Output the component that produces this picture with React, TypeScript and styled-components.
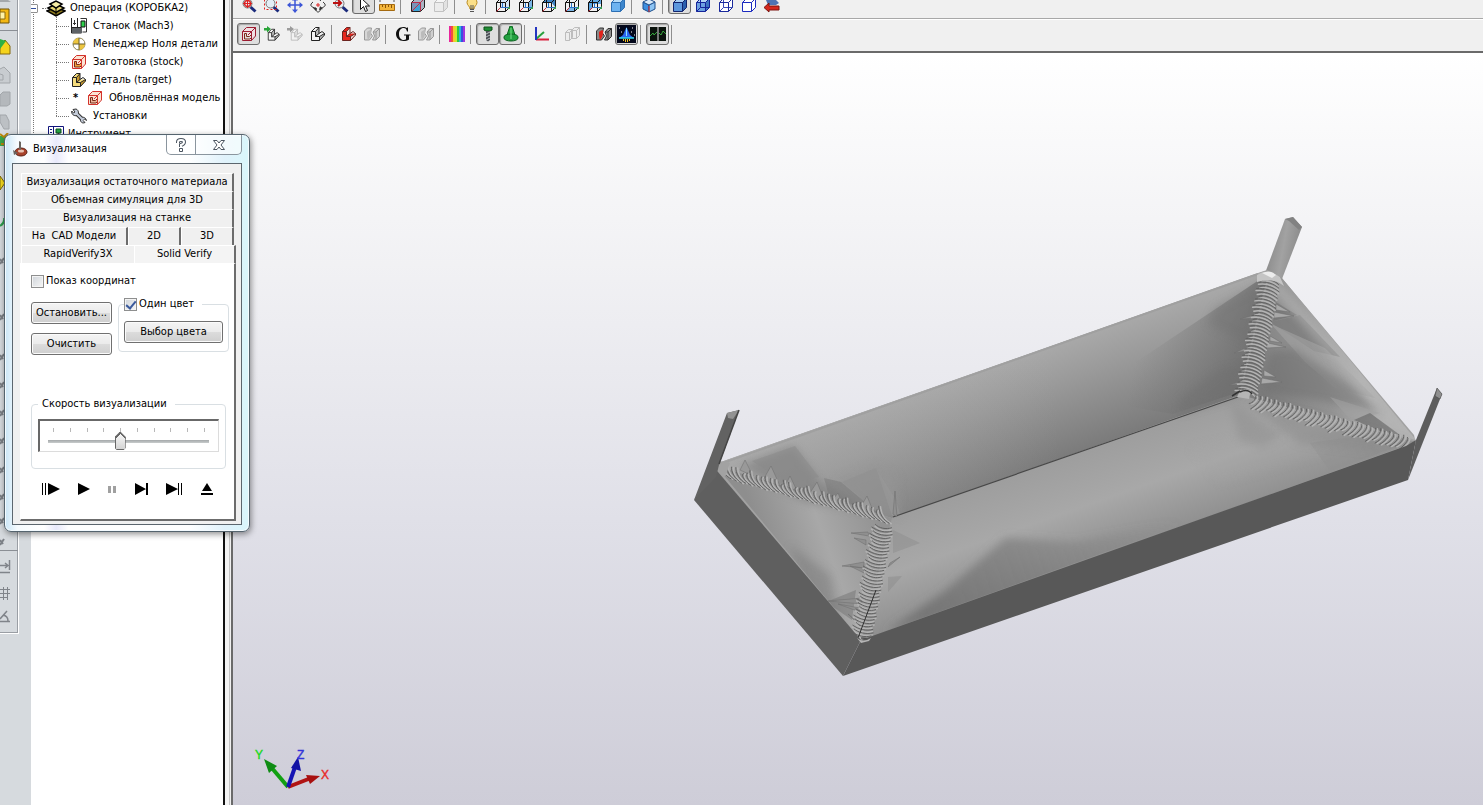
import React from "react";
import styled, { createGlobalStyle, css } from "styled-components";

const Global = createGlobalStyle`
  * { box-sizing: border-box; }
  body { margin: 0; overflow: hidden; background: #d6dade; }
  body, button, input, legend {
    font-family: "DejaVu Sans Condensed", "DejaVu Sans", sans-serif;
    font-size: 11px;
    line-height: 14px;
    color: #000;
  }
  svg { display: block; flex: none; }
`;

/* ---------- frame ---------- */

const Desktop = styled.div`
  position: relative;
  display: flex;
  height: 100vh;
  overflow: hidden;
`;

const SideStrip = styled.nav`
  flex: none;
  width: 31px;
  background: #d6dade;
`;

const SideTools = styled.div`
  display: flex;
  flex-direction: column;
  width: 19px;
  height: 634px;
  overflow: hidden;
  border-right: 1px solid #fff;
  border-bottom: 1px solid #fff;
  box-shadow: inset -1px -1px 0 #9a9ea4;
`;

const SideGroup = styled.div<{ $h: number; $rule?: boolean }>`
  position: relative;
  flex: none;
  height: ${(p) => p.$h}px;
  display: flex;
  flex-direction: column;
  border-bottom: ${(p) => (p.$rule ? "1px solid #8b8f95" : "none")};
`;

const SideButton = styled.button<{ $h: number }>`
  display: flex;
  align-items: center;
  width: 30px;
  height: ${(p) => p.$h}px;
  padding: 0;
  border: 0;
  background: none;
`;

const TreePane = styled.aside`
  flex: none;
  width: 192px;
  background: #fff;
  overflow: hidden;
`;

const Splitter = styled.div`
  flex: none;
  width: 10px;
  background: #f0f0f0;
  border-left: 2px solid #111;
  border-right: 2px solid #6a6a6a;
  box-shadow: inset 4px 0 0 #f4f4f4, inset 5px 0 0 #c4c4c4;
`;

const Main = styled.main`
  flex: 1;
  min-width: 0;
  display: flex;
  flex-direction: column;
  background: #f0f0f0;
`;

/* ---------- toolbars ---------- */

const Toolbar = styled.div<{ $clipped?: boolean }>`
  flex: none;
  display: flex;
  align-items: ${(p) => (p.$clipped ? "flex-end" : "center")};
  height: ${(p) => (p.$clipped ? 19 : 32)}px;
  padding: ${(p) => (p.$clipped ? "0 4px 4px" : "0 4px 1px")};
  overflow: hidden;
  border-bottom: 1px solid ${(p) => (p.$clipped ? "#a8a8a8" : "#f0f0f0")};
  box-shadow: 0 1px 0 #fff;
  button {
    padding-top: ${(p) => (p.$clipped ? 3 : 0)}px;
  }
`;

const ToolButton = styled.button<{ $pressed?: boolean }>`
  flex: none;
  display: flex;
  align-items: center;
  justify-content: center;
  width: 23px;
  height: 22px;
  padding: 0;
  border: 1px solid transparent;
  border-radius: 3px;
  background: none;
  ${(p) =>
    p.$pressed &&
    css`
      border-color: #6d6d6d;
      background: #dedede;
      box-shadow: inset 1px 1px 1px #a5a5a5;
    `}
`;

const ToolRule = styled.span`
  flex: none;
  width: 8px;
  height: 19px;
  border-left: 2px solid transparent;
  background: linear-gradient(#8e8e8e, #8e8e8e) 0 0 / 1px 100% no-repeat;
`;

const Viewport = styled.section`
  position: relative;
  flex: 1;
  min-height: 0;
  border-top: 2px solid #6a6a6a;
  background: linear-gradient(#ffffff, #f4f4f6 22%, #e0e0e8 62%, #cecdd8);
`;

const Scene = styled.svg`
  width: 100%;
  height: 100%;
`;

const Axes = styled.svg`
  position: absolute;
  left: 17px;
  bottom: 10px;
`;

/* ---------- icons ---------- */

const Svg = ({ w = 16, h = 16, children }: { w?: number; h?: number; children: React.ReactNode }) => (
  <svg width={w} height={h} viewBox={`0 0 ${w} ${h}`} fill="none" aria-hidden="true">
    {children}
  </svg>
);

type CubeProps = { line?: string; front?: string; top?: string; side?: string; hidden?: string };
const Cube = ({ line = "#111", front = "none", top = "none", side = "none", hidden }: CubeProps) => (
  <Svg>
    <path d="M1.5 5.5h9v9h-9z" fill={front} />
    <path d="M1.5 5.5l4-4h9l-4 4z" fill={top} />
    <path d="M10.5 5.5l4-4v9l-4 4z" fill={side} />
    {hidden && <path d="M5.5 1.5v9h9M5.5 10.5l-4 4" stroke={hidden} />}
    <path d="M1.5 5.5h9v9h-9zM1.5 5.5l4-4h9v9l-4 4M10.5 5.5l4-4" stroke={line} />
  </Svg>
);

/* View cubes: black wire box with one face tinted and a red and blue axis hint. */
const ViewCube = ({ face, tint = "#7ab6e6" }: { face: string; tint?: string }) => (
  <Svg>
    <path d={face} fill={tint} />
    <path d="M1.5 5.5h9v9h-9zM1.5 5.5l4-4h9v9l-4 4M10.5 5.5l4-4M5.5 1.5v9" stroke="#111" />
    <path d="M5.5 10.500h9" stroke="#2b74c8" />
    <path d="M7.500 6v5" stroke="#2b74c8" />
    <path d="M5.500 10.500l-4 4" stroke="#c8303c" />
    <path d="M12 12l3-3v3z" fill="#3aa04a" />
  </Svg>
);

type LProps = { line?: string; fill?: string; shade?: string; arrow?: string };
const LPart = ({ line = "#222", fill = "#f4f4f4", shade = "#b8b8b8", arrow }: LProps) => (
  <Svg>
    <g transform={arrow ? "translate(3 2)" : "translate(0 0)"}>
      <g transform={arrow ? "scale(.84)" : undefined}>
        <path d="M1.500 5.500l4-4H9v6h5.500V9l-5 5.500h-8z" fill={fill} />
        <path d="M5.500 5.500L9 1.500v6l-3.500 3zM9.500 10.500l5-3V9l-5 5.500z" fill={shade} />
        <path d="M1.500 5.500l4-4H9v6l3-2 2.500 2V9l-5 5.500h-8zM1.500 5.500h4v5h4v4M5.500 5.500L9 1.500M5.500 10.500l3.500-3M9.500 10.500l5-3" stroke={line} />
      </g>
    </g>
    {arrow && <path d="M0 2h3V0l4 3-4 3.500V4.500H0z" fill={arrow} />}
  </Svg>
);

const StockPart = ({ line = "#d3322b", fill = "#fbe3d2", inner = "#f0a33a" }) => (
  <Svg>
    <path d="M1.500 5.500l4-4h9v8l-4 5h-9z" fill={fill} />
    <path d="M3.500 7.500h2v3h3l2-2v3l-1.500 1.500h-5.500z" fill={inner} stroke="#7b2a1a" />
    <path d="M1.500 5.500h9v9h-9zM1.500 5.500l4-4h9v8.500l-4 4.500M10.500 5.500l4-4M10.500 5.500L7 9" stroke={line} />
  </Svg>
);

const HalfParts = ({ left = "#d6d6d6", right = "#cfcfcf", line = "#999", core = "#bbb" }) => (
  <Svg>
    <path d="M.500 5l3-3h4l-1 5 2 3-3 4h-5z" fill={left} stroke={line} />
    <path d="M3 6c3-3 5-2 4 1 0 2-1 5-3 7-1-2-1-5-1-8z" fill={core} />
    <path d="M9 6l3-3.500h3.500v8L12 14H8.500l2-4z" fill={right} stroke={line} />
    <path d="M12 6v8M12 6l3.500-3.500M9 6h3" stroke={line} />
  </Svg>
);

const Lens = ({ children }: { children?: React.ReactNode }) => (
  <Svg>
    <path d="M9.500 10l5 4.500" stroke="#1b2b7c" strokeWidth="3" />
    <circle cx="6.500" cy="6.500" r="4.500" fill="#e3eef6" stroke="#777" />
    {children}
  </Svg>
);

const topIcons: (React.ReactNode | "|" | { pressed: React.ReactNode })[] = [
  <Lens><circle cx="6.500" cy="6.500" r="3" stroke="#d22" strokeWidth="1.500" /><path d="M6.500 2v9M2 6.500h9" stroke="#d22" /></Lens>,
  <Lens><path d="M.500 .500h12v12H.500z" stroke="#d22" strokeDasharray="2 2" /></Lens>,
  <Svg><path d="M8 1v14M1 8h14" stroke="#3c55d6" strokeWidth="1.500" /><path d="M8 0l3 3.500H5zM8 16l3-3.500H5zM0 8l3.500-3v6zM16 8l-3.500-3v6z" fill="#3c55d6" /></Svg>,
  <Svg><path d="M3 5C-1 8 1 10.500 6 11M13 5c4 3 2 5-2 6" stroke="#333" /><path d="M6 3c1-3 4-3 4.500 1M6 12c0 4 4 4 4.500 0" stroke="#333" /><path d="M8 6v4M6 8h4" stroke="#d22" /><path d="M10 9l-1 4 4-1zM7 11H3l3 3z" fill="#333" /></Svg>,
  <Lens><path d="M0 6h8M5 3l3 3-3 3" stroke="#b11" strokeWidth="2" /></Lens>,
  { pressed: <Svg><path d="M4.500 .500v12l3-3 2 5 2-1-2-4.500h4z" fill="#fff" stroke="#111" /></Svg> },
  <Svg><path d="M.500 7.500h15v6H.500z" fill="#f3b53a" stroke="#a56a10" /><path d="M3.500 8v2M6.500 8v3M9.500 8v2M12.500 8v3" stroke="#8a5208" /><path d="M1 2.500h14M1 1v4M15 1v4" stroke="#555" /></Svg>,
  "|",
  <Svg><path d="M1.500 5.500l4-4h9v9l-4 4h-9z" fill="#aab4c4" stroke="#222" /><path d="M2 6h8v8H2z" fill="#7a94b8" /><path d="M3 14l8-8v6l-3 2z" fill="#38a4d8" /><path d="M2 14l9-9M10.500 14V5.500h-9M10.500 5.500l4-4" stroke="#b8304c" /></Svg>,
  <Cube line="#c2c2c2" front="#ececec" top="#f6f6f6" side="#e2e2e2" />,
  "|",
  <Svg><path d="M8 1c-3 0-5 2-5 4.500 0 3 3 3.500 3 6.500h4c0-3 3-3.500 3-6.500C13 3 11 1 8 1z" fill="#fbe08a" stroke="#b98a20" /><path d="M6 12.500h4M6 14.500h4M7 8v4M9 8v4" stroke="#555" /></Svg>,
  "|",
  <ViewCube face="M5.500 1.500h9v9h-9z" tint="#d4e8f8" />,
  <ViewCube face="M10.500 5.500l4-4v9l-4 4z" />,
  <ViewCube face="M1.500 5.500l4-4h9v9l-4-5z" tint="#3f84c4" />,
  <ViewCube face="M1.500 14.500l4-4h9l-4 4z" />,
  <ViewCube face="M1.500 5.500l4-4v9l-4 4zM6 2h8v5H6z" tint="#5fa8e2" />,
  <Cube line="#2c6fb4" front="#6db3f0" top="#b7dbf7" side="#3d86cc" />,
  "|",
  <Svg><path d="M8 15V8L2 5v7z" fill="#3f8fe0" stroke="#1c4e8c" /><path d="M8 15V8l6-3v7z" fill="#8cc4f4" stroke="#1c4e8c" /><path d="M2 5l6-3 6 3-6 3z" fill="#dbeaf8" stroke="#1c4e8c" /><path d="M8 15V9" stroke="#d33" /></Svg>,
  "|",
  { pressed: <Cube line="#12246e" front="#5d97dd" top="#a8cdf2" side="#2a5fae" /> },
  <Cube line="#14249a" front="#6da0e0" top="#b4d4f4" side="#3e74c0" hidden="#14249a" />,
  <Cube line="#1b2a9c" front="#fff" top="#fff" side="#fff" hidden="#3a4ab8" />,
  <Cube line="#1b2ac0" front="#fff" top="#fff" side="#fff" />,
  <Svg><path d="M2 3h10l3 3-3 2H4z" fill="#4e74b4" /><path d="M0 10.500L5 6v3h10v4H5v2z" fill="#d5281e" stroke="#7c1410" /></Svg>,
];

const midIcons: typeof topIcons = [
  { pressed: <StockPart line="#9c1c30" fill="#f0dfe2" inner="#ddd" /> },
  <LPart arrow="#2aa53a" />,
  <LPart arrow="#9c9c9c" line="#b8b8b8" fill="#f2f2f2" shade="#ddd" />,
  <LPart />,
  "|",
  <LPart line="#6c2420" fill="#e8281e" shade="#f4dcd8" />,
  <HalfParts />,
  "|",
  <Svg><path d="M13 1.500v4h-1C11.500 3 10.500 2 8.700 2 5.800 2 4 4.400 4 8s1.800 6 4.700 6c1 0 1.800-.300 2.300-.800V9.500H9v-1h6.500v1H14v4c-1.500 1-3.300 1.500-5.500 1.500C4.200 15 1 12.200 1 8s3.200-7 7.300-7c1.500 0 2.500.400 3.200 1l.700-.500z" fill="#111" /></Svg>,
  <HalfParts />,
  "|",
  <Svg>{["#e8269c", "#f0503c", "#f6c82a", "#c8ea2c", "#2cc840", "#28b8d8", "#3c50e0", "#a034e0"].map((c, i) => <path key={c} d={`M${i * 2} 0h2v16h-2z`} fill={c} />)}</Svg>,
  "|",
  { pressed: <Svg><path d="M4 1h8v3l-2 1H6L4 4z" fill="#1f8c34" stroke="#0c5018" /><path d="M6 5h4v9l-2 1.500L6 14z" fill="#4a4f54" /><path d="M6 8l4-2M6 11l4-2M6 14l4-2" stroke="#b8bcc0" /></Svg> },
  { pressed: <Svg><path d="M7 0h2l3 9H4z" fill="#22a63c" stroke="#0c6420" /><path d="M1 11c0-4 14-4 14 0v1c0 4-14 4-14 0z" fill="#23a040" stroke="#0c6420" /><path d="M8 2v11" stroke="#7ae08c" /></Svg> },
  "|",
  <Svg><path d="M2 13.500h13" stroke="#d8203c" strokeWidth="2" /><path d="M2 13L10 6" stroke="#28a03c" strokeWidth="2" /><path d="M2 1v13" stroke="#2434c0" strokeWidth="2" /></Svg>,
  "|",
  <Svg><path d="M.500 6.500l3-3h4v8l-3 3h-4zM6.500 4.500l3-3h5v8l-3 3h-5zM.500 6.500h4v8M6.500 4.500h5v8M4.500 6.500l3-3M11.500 4.500l3-3" fill="#ededed" stroke="#bdbdbd" /></Svg>,
  "|",
  <HalfParts left="#8a8a8a" right="#8f8f8f" line="#333" core="#e0241c" />,
  { pressed: <Svg w={19} h={18}><path d="M0 0h19v18H0z" fill="#04081c" /><path d="M9.500 2l3.500 8 4 3H2l4-3z" fill="#2a64f0" /><path d="M9.500 3v8" stroke="#8ce0ff" /><path d="M2 13h15" stroke="#30d8e8" strokeWidth="1.500" /><path d="M6.500 14v2M8.500 14v3M10.500 14v3M12.500 14v2" stroke="#f4c020" /><path d="M2 3h1M15 3h1M4 7h1M14 7h1M17 10h1" stroke="#fff" /></Svg> },
  "|",
  { pressed: <Svg><path d="M0 1h7v14H0zM9 1h7v14H9z" fill="#0a120c" /><path d="M0 10l3-3 1 2 3-3M9 7l2 2 2-4 3 3" stroke="#36a43c" /><path d="M7 1h2v14H7z" fill="#777" /></Svg> },
  "|",
];

const renderTools = (items: typeof topIcons, group: string) =>
  items.map((item, i) => {
    if (item === "|") return <ToolRule key={i} />;
    const pressed = !!item && typeof item === "object" && "pressed" in item;
    return (
      <ToolButton key={i} $pressed={pressed} aria-pressed={pressed} aria-label={`${group} ${i + 1}`}>
        {pressed ? (item as { pressed: React.ReactNode }).pressed : (item as React.ReactNode)}
      </ToolButton>
    );
  });

/* ---------- operation tree ---------- */

const Tree = styled.ul`
  list-style: none;
  margin: -1px 0 0 2px;
  padding: 0;
  border-left: 1px dotted #777;
`;

const Branch = styled.ul`
  list-style: none;
  margin: 0 0 0 22px;
  padding: 0;
  position: relative;
  &::before {
    content: "";
    position: absolute;
    left: 0;
    top: 0;
    bottom: 9px;
    border-left: 1px dotted #777;
  }
`;

const Node = styled.div<{ $root?: boolean }>`
  display: flex;
  align-items: center;
  height: 18px;
  gap: ${(p) => (p.$root ? 4 : 6)}px;
  white-space: nowrap;
`;

const Twig = styled.span<{ $w: number }>`
  flex: none;
  width: ${(p) => p.$w}px;
  margin-right: -4px;
  border-bottom: 1px dotted #777;
`;

const Expander = styled.button`
  flex: none;
  width: 9px;
  height: 9px;
  margin-left: -5px;
  padding: 0;
  display: grid;
  place-items: center;
  border: 1px solid #919191;
  border-radius: 1px;
  background: #fff;
  &::after {
    content: "";
    width: 5px;
    height: 1px;
    background: #33509c;
  }
`;

const Star = styled.span`
  width: 10px;
  padding-left: 2px;
  font-weight: bold;
`;

const OperationIcon = () => (
  <Svg w={20} h={17}>
    <path d="M1 11l9-4 9 4-9 5z" fill="#8e7a1c" stroke="#000" strokeWidth="1.500" />
    <path d="M2 8l8-4 8 4-8 4.500z" fill="#e9d873" stroke="#000" strokeWidth="1.500" />
    <path d="M4 4l6-3 6 3-6 4z" fill="#f6eda6" stroke="#000" strokeWidth="1.500" />
    <path d="M10 8v8" stroke="#000" />
  </Svg>
);

const ToolListIcon = () => (
  <Svg>
    <path d="M.500 .500h15v14H.500z" fill="#fff" stroke="#10147c" />
    <path d="M5.500 1v14M2 3.500h2M2 6.500h2M2 9.500h2" stroke="#10147c" />
    <path d="M8 3h5v4h-5z" fill="#26a546" stroke="#0d4d20" />
    <path d="M10.500 7v6" stroke="#333" strokeWidth="2" />
  </Svg>
);

const branch: { label: string; icon: React.ReactNode; star?: boolean }[] = [
  {
    label: "Станок (Mach3)",
    icon: (
      <Svg>
        <path d="M.500 0v15h10M6.500 0v9M.500 9.500h10" stroke="#222" />
        <path d="M1 10h10v5H1z" fill="#5e6266" />
        <path d="M3.500 2v5M2 5.500h3" stroke="#333" />
        <path d="M9.500 .500h6V14h-4" stroke="#333" />
        <path d="M10 3h4v6h-4z" fill="#2fd24c" stroke="#111" />
      </Svg>
    ),
  },
  {
    label: "Менеджер Ноля детали",
    icon: (
      <Svg>
        <circle cx="8" cy="8" r="6" fill="#fff" stroke="#8e8450" />
        <path d="M8 2a6 6 0 0 0-6 6h6zM8 14a6 6 0 0 0 6-6H8z" fill="#eec63e" />
        <path d="M8 2v12M2 8h12" stroke="#6b5f2c" />
      </Svg>
    ),
  },
  { label: "Заготовка (stock)", icon: <StockPart /> },
  { label: "Деталь (target)", icon: <LPart fill="#f5dc7e" shade="#c89a30" /> },
  { label: "Обновлённая модель", icon: <StockPart inner="#e9b49a" />, star: true },
  {
    label: "Установки",
    icon: (
      <Svg>
        <path d="M5 5l7 7" stroke="#333" strokeWidth="4" />
        <path d="M2 1.500l2 2.500-1.500 1L.800 3C0 6 3 8.500 6 7.500 8 6 8 2 5 1z" fill="#c4ccda" stroke="#333" />
        <path d="M15.500 12.500l-2-1.500-1.500 1.500 2 2c-3 1.500-5-1-4.500-3.500 1-2.500 5-2.500 6 1.500z" fill="#c4ccda" stroke="#333" />
        <path d="M5 5l7 7" stroke="#c4ccda" strokeWidth="2" />
      </Svg>
    ),
  },
];

/* ---------- visualisation dialog ---------- */

const Dialog = styled.div`
  position: absolute;
  left: 4px;
  top: 134px;
  width: 246px;
  padding: 0 7px 6px;
  border: 1px solid #55646e;
  border-radius: 7px;
  background: linear-gradient(90deg, #c9e5f6, #f6fbfe 5%, #fff 16%, #e8e9fb 21%, #fff 26%, #fff 75%, #e0f2fb 90%, #d9f6fb);
  box-shadow: inset 0 0 0 1px #f4fbff, 1px 2px 6px rgba(0, 0, 0, 0.45);
`;

const TitleBar = styled.header`
  display: flex;
  align-items: flex-start;
  height: 28px;
`;

const Title = styled.h1`
  flex: 1;
  display: flex;
  align-items: center;
  gap: 5px;
  height: 28px;
  margin: 0;
  font-size: 11px;
  font-weight: normal;
`;

const CaptionButtons = styled.div`
  display: flex;
  width: 76px;
  height: 20px;
  border: 1px solid #8a959e;
  border-top: 0;
  border-radius: 0 0 5px 5px;
  background: rgba(255, 255, 255, 0.6);
`;

const CaptionButton = styled.button<{ $wide?: boolean }>`
  flex: ${(p) => (p.$wide ? 1 : "0 0 28px")};
  display: grid;
  place-items: center;
  padding: 0;
  border: 0;
  border-left: ${(p) => (p.$wide ? "1px solid #8a959e" : "0")};
  background: none;
`;

const Client = styled.div`
  padding: 9px 5px 3px 7px;
  border: 1px solid #5c666e;
  background: #f0f0f0;
`;

const TabRows = styled.div`
  display: flex;
  flex-direction: column;
  padding: 0 2px 0 1px;
`;

const TabRow = styled.div`
  display: flex;
  height: 18px;
`;

const Tab = styled.button<{ $w?: number; $edge?: boolean; $active?: boolean }>`
  flex: ${(p) => (p.$w ? `0 0 ${p.$w}px` : 1)};
  padding: 0 0 1px;
  border: 0;
  border-top: 1px solid #fff;
  border-left: 1px solid #fff;
  border-right: ${(p) => (p.$edge ? "2px solid #6c6c6c" : "0")};
  background: ${(p) => (p.$active ? "#f4f4f4" : "#f0f0f0")};
  white-space: nowrap;
  ${(p) => p.$active && css`margin-right: -2px;`}
`;

const TabPage = styled.div`
  height: 258px;
  padding: 10px 5px 0 10px;
  border: 1px solid #fff;
  border-right: 2px solid #6c6c6c;
  border-bottom: 2px solid #6c6c6c;
  background: #fff;
`;

const CheckLabel = styled.label`
  display: flex;
  align-items: center;
  gap: 2px;
  height: 14px;
  white-space: nowrap;
`;

const Check = styled.input`
  appearance: none;
  width: 13px;
  height: 13px;
  margin: 0;
  border: 1px solid #8e8f8f;
  background: linear-gradient(135deg, #cfd4da, #f6f6f6);
  box-shadow: inset 0 0 0 1px #f4f4f4;
  display: grid;
  place-items: center;
  &:checked::after {
    content: "";
    width: 4px;
    height: 8px;
    margin-bottom: 2px;
    border: solid #3b5a9c;
    border-width: 0 2px 2px 0;
    transform: rotate(40deg);
  }
`;

const Controls = styled.div`
  display: flex;
  align-items: flex-start;
  gap: 6px;
  margin-top: 9px;
`;

const ButtonColumn = styled.div`
  display: flex;
  flex-direction: column;
  gap: 9px;
  width: 81px;
  padding-top: 5px;
`;

const PushButton = styled.button`
  width: 100%;
  height: 22px;
  padding: 0;
  border: 1px solid #707070;
  border-radius: 3px;
  background: linear-gradient(#f4f4f4, #ebebeb 48%, #dcdcdc 50%, #cfcfcf);
  box-shadow: inset 0 0 0 1px #fbfbfb;
  white-space: nowrap;
`;

const Group = styled.fieldset<{ $speed?: boolean }>`
  flex: 1;
  min-width: 0;
  margin: ${(p) => (p.$speed ? "42px 3px 0 0" : "0")};
  padding: ${(p) => (p.$speed ? "8px 6px 16px" : "10px 5px 8px")};
  border: 1px solid #d9dfe3;
  border-radius: 4px;
  legend {
    padding: ${(p) => (p.$speed ? "0 8px 0 4px" : "0 8px 0 0")};
  }
`;

const SliderBox = styled.div`
  display: flex;
  flex-direction: column;
  height: 33px;
  padding: 7px 9px 0 8px;
  border: 1px solid #dcdcdc;
  border-top: 2px solid #686868;
  border-left: 2px solid #686868;
`;

const Ticks = styled.div`
  display: flex;
  justify-content: space-between;
  padding: 0 4px 0 5px;
`;

const Tick = styled.span`
  width: 1px;
  height: 4px;
  background: #b8b8b8;
`;

const Slider = styled.input`
  appearance: none;
  width: 100%;
  height: 18px;
  margin: 0;
  background: linear-gradient(#a4a8aa, #c8cccc) 0 8px / 100% 3px no-repeat;
  &::-webkit-slider-thumb {
    appearance: none;
    width: 11px;
    height: 18px;
    clip-path: polygon(0 5px, 5px 0, 6px 0, 11px 5px, 11px 16px, 9px 18px, 2px 18px, 0 16px);
    background:
      linear-gradient(135deg, #666 5px, transparent 5px) 0 0 / 6px 7px no-repeat,
      linear-gradient(225deg, #666 5px, transparent 5px) 100% 0 / 6px 7px no-repeat,
      linear-gradient(#fafafa, #d4d4d4) 1px 1px / 9px 16px no-repeat,
      #666;
  }
`;

const Transport = styled.div`
  display: flex;
  justify-content: space-between;
  padding: 11px 16px 0 11px;
`;

const TransportButton = styled.button`
  padding: 0;
  border: 0;
  height: 18px;
  display: grid;
  place-items: center;
  background: none;
`;

const TITLE = "Визуализация";

/* ---------- machined part ---------- */

type P = [number, number];

/* Rows of scallops left by the ball mill along a corner seam. */
const Scallops = ({ from, to, n, half, skew, bend, wave = 0 }: { from: P; to: P; n: number; half: number; skew: P; bend: number; wave?: number }) => {
  const len = Math.hypot(to[0] - from[0], to[1] - from[1]);
  const d: P = [(to[0] - from[0]) / len, (to[1] - from[1]) / len];
  return (
    <g fill="none" strokeLinecap="round">
      {Array.from({ length: n }, (_, i) => {
        const t = i / (n - 1);
        const lo = half + ((i * 7) % 5) / 2 - 1;
        const hi = half + ((i * 3) % 5) - 2 + wave * Math.abs(Math.sin(i * 0.8));
        const cx = from[0] + (to[0] - from[0]) * t;
        const cy = from[1] + (to[1] - from[1]) * t;
        const a = [cx - skew[0] * hi, cy - skew[1] * hi];
        const b = [cx + skew[0] * lo, cy + skew[1] * lo];
        const c1 = [cx - skew[0] * 4 - d[0] * bend, cy - skew[1] * 4 - d[1] * bend];
        const c2 = [cx + skew[0] * 4 - d[0] * bend, cy + skew[1] * 4 - d[1] * bend];
        const path = `M${a[0]} ${a[1]}C${c1[0]} ${c1[1]} ${c2[0]} ${c2[1]} ${b[0]} ${b[1]}`;
        return (
          <g key={i}>
            <path d={path} stroke="#b4b4b4" strokeWidth="1.500" transform={`translate(${d[0] * 2} ${d[1] * 2})`} />
            <path d={path} stroke="#626262" strokeWidth="1" />
          </g>
        );
      })}
    </g>
  );
};

const PartModel = () => (
  <Scene viewBox="233 53 1250 752" preserveAspectRatio="xMidYMid meet" role="img" aria-label="3D">
    <defs>
      <linearGradient id="back" gradientUnits="userSpaceOnUse" x1="988" y1="368" x2="1030" y2="486">
        <stop offset="0" stopColor="#a9a9a9" />
        <stop offset=".3" stopColor="#9a9a9a" />
        <stop offset="1" stopColor="#747474" />
      </linearGradient>
      <linearGradient id="backLight" gradientUnits="userSpaceOnUse" x1="820" y1="450" x2="1060" y2="440">
        <stop offset="0" stopColor="#aaa" stopOpacity=".35" />
        <stop offset="1" stopColor="#aaa" stopOpacity="0" />
      </linearGradient>
      <linearGradient id="front" gradientUnits="userSpaceOnUse" x1="1060" y1="450" x2="1100" y2="565">
        <stop offset="0" stopColor="#9c9c9c" />
        <stop offset=".5" stopColor="#a8a8a8" />
        <stop offset="1" stopColor="#8c8c8c" />
      </linearGradient>
      <linearGradient id="left" gradientUnits="userSpaceOnUse" x1="770" y1="560" x2="880" y2="520">
        <stop offset="0" stopColor="#8e8e8e" />
        <stop offset=".5" stopColor="#a8a8a8" />
        <stop offset="1" stopColor="#929292" />
      </linearGradient>
      <linearGradient id="right" gradientUnits="userSpaceOnUse" x1="1260" y1="385" x2="1350" y2="350">
        <stop offset="0" stopColor="#7c7c7c" />
        <stop offset=".6" stopColor="#949494" />
        <stop offset="1" stopColor="#b2b2b2" />
      </linearGradient>
      <linearGradient id="post" x1="0" x2="1" y1="0" y2=".3">
        <stop offset="0" stopColor="#7d7d7d" />
        <stop offset=".6" stopColor="#a2a2a2" />
        <stop offset="1" stopColor="#8a8a8a" />
      </linearGradient>
      <linearGradient id="cornerDark" gradientUnits="userSpaceOnUse" x1="1140" y1="340" x2="1255" y2="365">
        <stop offset="0" stopColor="#777" stopOpacity="0" />
        <stop offset="1" stopColor="#6c6c6c" stopOpacity=".85" />
      </linearGradient>
      <linearGradient id="wedge" gradientUnits="userSpaceOnUse" x1="920" y1="610" x2="1180" y2="520">
        <stop offset="0" stopColor="#6c6c6c" stopOpacity=".75" />
        <stop offset=".4" stopColor="#707070" stopOpacity=".5" />
        <stop offset="1" stopColor="#777" stopOpacity="0" />
      </linearGradient>
      <filter id="soft" x="-30%" y="-30%" width="160%" height="160%"><feGaussianBlur stdDeviation="4" /></filter>
      <clipPath id="body"><path d="M716 466L1262 273l19 4 135 163-555 200z" /></clipPath>
    </defs>

    <path d="M1264 276l21-57 8-2 9 10-20 52z" fill="url(#post)" />
    <path d="M1285 219l8-2 9 10-3 3-10-9z" fill="#828282" />

    <path d="M714 468q2-6 10-7L1255 274l12-4 14 7 133 158 2 9-8 5L861 643z" fill="#a2a2a2" />
    <path d="M718 463L1265 271l-25 124-348 123z" fill="url(#back)" />
    <path d="M718 463L1265 271l-25 124-348 123z" fill="url(#backLight)" />
    <path d="M892 518l348-123 176 47-555 200z" fill="url(#front)" />
    <path d="M716 466l176 52-31 122z" fill="url(#left)" />
    <path d="M1270 274l11 3 135 163-176-45z" fill="url(#right)" />

    <g clipPath="url(#body)">
      <path d="M1268 274l-135 90-20 40 60 10 66-22z" fill="url(#cornerDark)" />
      <path d="M1215 308l52-28-16 64-44-20z" fill="#707070" opacity=".4" filter="url(#soft)" />
      <path d="M1180 400l40-30 24-4-4 30-60 18z" fill="#6e6e6e" opacity=".4" filter="url(#soft)" />
      <path d="M740 466l54-20 26 36 45 28-60-8z" fill="#7d7d7d" opacity=".6" filter="url(#soft)" />
      <path d="M752 461l43-15 24 31-30 6z" fill="#8b8b8b" opacity=".55" />
      <path d="M836 480l40-15 22 12 2 40-40-13z" fill="#949494" opacity=".6" filter="url(#soft)" />
      <path d="M824 478l17 4 38 32-50-18z" fill="#707070" opacity=".4" />
      <path d="M876 468l-34 14 42 34 14-2z" fill="#8f8f8f" opacity=".45" />
      <path d="M876 468l20 32 4 14-8 2z" fill="#9a9a9a" opacity=".5" />
      <path d="M886 632l60-42 60-52 70 4 110-22v30z" fill="url(#wedge)" filter="url(#soft)" />
      <path d="M790 545l40 30 10 50-30-20z" fill="#777" opacity=".45" filter="url(#soft)" />
      <path d="M826 602l30-12-4 30z" fill="#7c7c7c" opacity=".6" />
      <path d="M893 530l27 13-27 10z" fill="#8e8e8e" opacity=".5" />
      <path d="M888 577l14-1-14 16z" fill="#8b8b8b" opacity=".5" />
      <path d="M1276 302l21 13-24 6z" fill="#707070" opacity=".7" />
      <path d="M1270 322l30-7 40 42-26-6z" fill="#767676" opacity=".6" />
      <path d="M1271 324l54 24 50 50-40-10-30-26z" fill="#a4a4a4" opacity=".6" />
      <path d="M1270 352l24-3 50 32 38 32-70-14-50-7z" fill="#6e6e6e" opacity=".5" filter="url(#soft)" />
      <path d="M1330 397l50 16-28 8z" fill="#a0a0a0" opacity=".6" />
      <path d="M1354 420l16-7 30 22-20-4z" fill="#6b6b6b" opacity=".7" />
      <path d="M1190 448l30 35 108-30-20-30z" fill="#a4a4a4" opacity=".25" filter="url(#soft)" />
      <path d="M1230 400l9 40 23 8 20-12z" fill="#8c8c8c" opacity=".45" filter="url(#soft)" />
      <path d="M1310 443l20 28 50-18-14-18z" fill="#8d8d8d" opacity=".3" />
      <path d="M1278 280L1414 440l-8-2L1272 290z" fill="#bababa" opacity=".55" filter="url(#soft)" />
      <path d="M1240 397l166 44-18 12-90-10z" fill="#868686" opacity=".45" filter="url(#soft)" />
    </g>

    <path d="M893 517L1238 397" stroke="#484848" strokeWidth="1.200" />
    <path d="M720 464L1258 274" stroke="#a0a0a0" strokeWidth="2" />

    {/* spikes thrown off the seams */}
    <g fill="#8f8f8f" stroke="#6c6c6c" strokeWidth=".500">
      <path d="M1258 314l-18 5 18-1zM1252 345l-18 8 18-3zM1246 380l-17 5 18-1z" />
      <path d="M1276 304l14 8-14-2zM1274 312l20 4-20 2zM1270 336l12 7-12-2zM1268 343l18 4-20 1zM1264 370l12 7-12-1zM1262 378l20 4-21 2z" fill="#a8a8a8" />
      <path d="M740 470l5-10 8 16zM763 480l8-14 9 20zM785 486l5-10 7 15zM808 496l9-14 8 20zM830 503l8-10 6 16zM860 508l7-12 9 22z" fill="#999" />
      <path d="M893 514l2-23 2 26z" />
      <path d="M868 532l-17 1 18 3zM866 540l-12-2 12 7zM864 562l-22 4 22 2zM864 568l-14-2 14 7zM862 598l-34 3 34 3zM860 608l-22-4 22 8zM858 622l-10-8 12 12z" />
      <path d="M890 563l10-6-12 10z" />
    </g>

    <Scallops from={[1270, 282]} to={[1247, 392]} n={34} half={10} skew={[0.95, 0.28]} bend={3} />
    <Scallops from={[1252, 400]} to={[1404, 442]} n={34} half={7} skew={[0.55, -0.7]} bend={-3} wave={4} />
    <Scallops from={[728, 474]} to={[886, 518]} n={34} half={7} skew={[0.5, 0.8]} bend={5} wave={6} />
    <Scallops from={[883, 526]} to={[862, 634]} n={34} half={10} skew={[0.95, 0.2]} bend={-3} />

    <path d="M1257 275q10-7 23 2l4 9q-12-9-27-4z" fill="#c4c4c4" />
    <path d="M1262 273q8-4 14 2l-4 3z" fill="#ececec" />
    <path d="M1237 397q4-10 14-7l-2 9z" fill="#b5b5b5" />
    <path d="M1232 396l8-5M1240 392q8-4 12 2" stroke="#333" strokeWidth="1.500" fill="none" />
    <path d="M716 466q6-6 14-3l-4 12q-6 6-8 1z" fill="#a2a2a2" />
    <path d="M876 590l-18 48M861 638l14 1" stroke="#2e2e2e" />

    <path d="M861 640L1406 446l10-6-8 40-565 196z" fill="#585858" />
    <path d="M714 468l4 4L861 640l-18 36L694 500z" fill="#5f5f5f" />
    <path d="M694 500l33-87 12-3-20 55-3 12z" fill="#626262" />
    <path d="M727 413l12-3-6 9-5-1z" fill="#929292" />
    <path d="M739 410l-20 54" stroke="#444" strokeWidth="1.500" />
    <path d="M1408 480l8-40 21-52 5 6z" fill="#5d5d5d" />
    <path d="M1437 388l5 6-2 5-5-3z" fill="#8f8f8f" stroke="#444" strokeWidth=".500" />
    <path d="M857 638q6 5 14 0l-2 3-8 2z" fill="#b5b5b5" />
  </Scene>
);

const AxisTriad = () => (
  <Axes width="84" height="50" viewBox="250 745 84 50" fontFamily="Liberation Sans, sans-serif" fontSize="12" aria-hidden="true">
    <path d="M288 787L271 767" stroke="#12a012" strokeWidth="4" />
    <path d="M264 759l13 7-8 7z" fill="#0f8c14" />
    <path d="M288 787l23-9" stroke="#b01414" strokeWidth="4" />
    <path d="M320 776l-10 8-4-9z" fill="#a81010" />
    <path d="M288 787l7-20" stroke="#1414b4" strokeWidth="4" />
    <path d="M298 757l3 14-10-3z" fill="#1212a4" />
    <text x="255" y="759" fill="#18d818" stroke="#18d818" strokeWidth=".400">Y</text>
    <text x="297" y="759" fill="#3434d8" stroke="#3434d8" strokeWidth=".400">Z</text>
    <text x="321" y="779" fill="#e82828" stroke="#e82828" strokeWidth=".400">X</text>
  </Axes>
);

/* ---------- page ---------- */

const transport: { name: string; w: number; d: string; off?: boolean }[] = [
  { name: "С начала", w: 18, d: "M0 1h1v12H0zM3 1h1v12H3zM6 1l12 6-12 6z" },
  { name: "Пуск", w: 12, d: "M0 1l12 6-12 6z" },
  { name: "Пауза", w: 8, d: "M0 4h3v7H0zM5 4h3v7H5z", off: true },
  { name: "Шаг", w: 13, d: "M0 1l11 6-11 6zM11 1h2v12h-2z" },
  { name: "До конца", w: 17, d: "M0 1l12 6-12 6zM12 1h1v12h-1zM15 1h1v12h-1z" },
  { name: "Извлечь", w: 12, d: "M6 1l5 8H1zM0 11h12v2H0z" },
];

export default function App() {
  return (
    <Desktop>
      <Global />
      <SideStrip aria-label="Команды">
        <SideTools>
          <SideGroup $h={31} $rule>
            <SideButton $h={31} aria-label="Открыть">
              <Svg w={30} h={31}>
                <path d="M0 0h8l3 2H0z" fill="#a4a8ac" />
                <path d="M0 9h9v14H0z" fill="#f3b712" stroke="#6f5208" />
                <path d="M0 12h5v7H0z" fill="#fff3a8" stroke="#8a6a10" />
              </Svg>
            </SideButton>
          </SideGroup>
          <SideGroup $h={102}>
            <SideButton $h={32} aria-label="Деталь">
              <Svg w={30} h={32}>
                <path d="M0 14l5-5 5 6v8H0z" fill="#f5d31c" stroke="#84690c" />
                <path d="M0 8l6 2-6 8z" fill="#2fb043" />
              </Svg>
            </SideButton>
            <SideButton $h={24} aria-label="Вытянуть">
              <Svg w={12} h={18}><path d="M0 3l4-2 6 6v10H0M0 8l3 1v5H0" stroke="#a2a6aa" fill="#c8ccd0" /></Svg>
            </SideButton>
            <SideButton $h={23} aria-label="Вырезать">
              <Svg w={12} h={18}><path d="M0 5l3-3h7v12l-3 2H0z" stroke="#a2a6aa" fill="#b4b8bc" /></Svg>
            </SideButton>
            <SideButton $h={23} aria-label="Скруглить">
              <Svg w={12} h={18}><path d="M0 2h6l3 6v8H4L0 9z" stroke="#a2a6aa" fill="#bcc0c4" /></Svg>
            </SideButton>
          </SideGroup>
          <SideGroup $h={80}>
            <SideButton $h={20} aria-label="Мастер">
              <Svg w={12} h={20}><path d="M0 3h6v10H0z" fill="#3aa648" /><path d="M0 1l4 3 4-4M1 11h6" stroke="#b8860b" strokeWidth="2" /></Svg>
            </SideButton>
            <SideButton $h={60} aria-label="Точка">
              <Svg w={12} h={20}><path d="M0 3l5 7-5 7z" fill="#f6dc1e" stroke="#7c6a08" /></Svg>
            </SideButton>
          </SideGroup>
          <SideGroup $h={338} $rule>
            {[18, 60, 52, 28, 28, 28, 28, 30, 24, 24, 17].map((h, i) => (
              <SideButton key={i} $h={h} aria-label={`Эскиз ${i + 1}`}>
                <Svg w={8} h={12}><path d={i ? "M0 9l4-6M0 4l3 4" : "M0 10q5-3 4-8"} stroke={i ? "#7c8086" : "#2c9c4c"} strokeWidth="2" /></Svg>
              </SideButton>
            ))}
          </SideGroup>
          <SideGroup $h={80}>
            <SideButton $h={32} aria-label="Размер">
              <Svg w={12} h={16}><path d="M0 6.500h7M5 4l3 2.500L5 9M9.500 1v10M0 13.500h10" stroke="#80848a" strokeWidth="1.500" /></Svg>
            </SideButton>
            <SideButton $h={20} aria-label="Сетка">
              <Svg w={12} h={16}><path d="M0 4.500h10M0 8.500h10M0 12.500h8M3.500 2v13M7.500 2v13" stroke="#80848a" /></Svg>
            </SideButton>
            <SideButton $h={26} aria-label="Угол">
              <Svg w={12} h={16}><path d="M0 13.500h10M0 11L7 3M3 7q5 1 5 6" stroke="#80848a" strokeWidth="1.500" /></Svg>
            </SideButton>
          </SideGroup>
        </SideTools>
      </SideStrip>

      <TreePane>
        <Tree>
          <li>
            <Node $root>
              <Expander aria-label="Свернуть" />
              <Twig $w={4} />
              <OperationIcon />
              <span>Операция (КОРОБКА2)</span>
            </Node>
            <Branch>
              {branch.map((n) => (
                <li key={n.label}>
                  <Node>
                    <Twig $w={13} />
                    {n.star && <Star>*</Star>}
                    {n.icon}
                    <span>{n.label}</span>
                  </Node>
                </li>
              ))}
            </Branch>
          </li>
          <li>
            <Node $root>
              <Twig $w={14} />
              <ToolListIcon />
              <span>Инструмент</span>
            </Node>
          </li>
        </Tree>
      </TreePane>

      <Splitter />

      <Main>
        <Toolbar $clipped role="toolbar" aria-label="Вид">{renderTools(topIcons, "Вид")}</Toolbar>
        <Toolbar role="toolbar" aria-label="Модель">{renderTools(midIcons, "Модель")}</Toolbar>
        <Viewport>
          <PartModel />
          <AxisTriad />
        </Viewport>
      </Main>

      <Dialog role="dialog" aria-label={TITLE}>
        <TitleBar>
          <Title>
            <Svg>
              <ellipse cx="9" cy="11" rx="6" ry="4" fill="#a8432c" stroke="#5c2014" />
              <ellipse cx="9" cy="10" rx="3" ry="1.500" fill="#e8c4b4" />
              <path d="M7 0l2 1v8L7 8zM1 9l5 3-4 2z" fill="#6a6460" />
            </Svg>
            {TITLE}
          </Title>
          <CaptionButtons>
            <CaptionButton aria-label="Справка">
              <Svg w={12} h={14}>
                <path d="M3 5V4q0-2 3-2t3 2q0 2-3 3v2" stroke="#4b5560" strokeWidth="4" />
                <path d="M3 5V4q0-2 3-2t3 2q0 2-3 3v2" stroke="#fff" strokeWidth="2" />
                <path d="M4.500 10.500h3v3h-3z" stroke="#4b5560" fill="#fff" />
              </Svg>
            </CaptionButton>
            <CaptionButton $wide aria-label="Закрыть">
              <Svg w={14} h={12}>
                <path d="M1.500 1.500H5L7 4l2-2.500h3.500L9 6l3.500 4.500H9L7 8l-2 2.500H1.500L5 6z" stroke="#4b5560" fill="#fff" />
              </Svg>
            </CaptionButton>
          </CaptionButtons>
        </TitleBar>
        <Client>
          <TabRows role="tablist">
            <TabRow><Tab role="tab" $edge>Визуализация остаточного материала</Tab></TabRow>
            <TabRow><Tab role="tab" $edge>Объемная симуляция для 3D</Tab></TabRow>
            <TabRow><Tab role="tab" $edge>Визуализация на станке</Tab></TabRow>
            <TabRow>
              <Tab role="tab" $edge $w={107}>На&nbsp; CAD Модели</Tab>
              <Tab role="tab" $edge $w={53}>2D</Tab>
              <Tab role="tab" $edge>3D</Tab>
            </TabRow>
            <TabRow>
              <Tab role="tab" $w={113}>RapidVerify3X</Tab>
              <Tab role="tab" aria-selected $edge $active>Solid Verify</Tab>
            </TabRow>
          </TabRows>
          <TabPage role="tabpanel">
            <CheckLabel><Check type="checkbox" /> Показ координат</CheckLabel>
            <Controls>
              <ButtonColumn>
                <PushButton>Остановить...</PushButton>
                <PushButton>Очистить</PushButton>
              </ButtonColumn>
              <Group>
                <legend>
                  <CheckLabel><Check type="checkbox" defaultChecked /> Один цвет</CheckLabel>
                </legend>
                <PushButton>Выбор цвета</PushButton>
              </Group>
            </Controls>
            <Group $speed>
              <legend>Скорость визуализации</legend>
              <SliderBox>
                <Ticks>{Array.from({ length: 10 }, (_, i) => <Tick key={i} />)}</Ticks>
                <Slider type="range" min={0} max={9} defaultValue={4} aria-label="Скорость визуализации" />
              </SliderBox>
            </Group>
            <Transport>
              {transport.map((t) => (
                <TransportButton key={t.name} aria-label={t.name} disabled={t.off}>
                  <Svg w={t.w} h={14}><path d={t.d} fill={t.off ? "#a0a0a0" : "#000"} /></Svg>
                </TransportButton>
              ))}
            </Transport>
          </TabPage>
        </Client>
      </Dialog>
    </Desktop>
  );
}
